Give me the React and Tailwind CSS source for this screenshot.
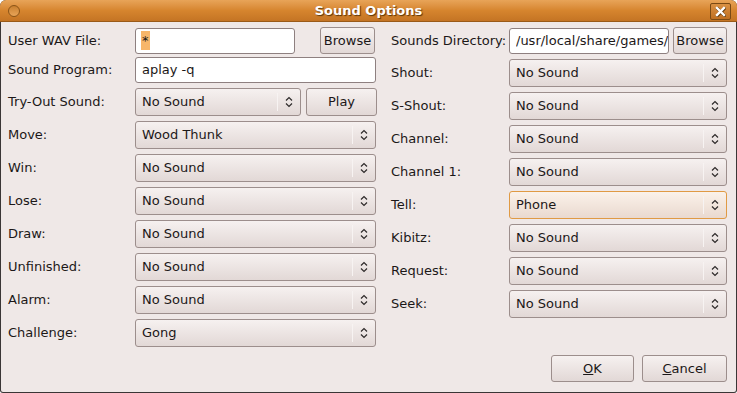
import React from 'react';

const font = { fontFamily: '"DejaVu Sans", Verdana, sans-serif' };

function Arrows() {
  return (
    <svg width="8" height="12" viewBox="0 0 8 12" className="text-[#2e2a2a]">
      <path d="M1 4.5 L4 1.5 L7 4.5" fill="none" stroke="currentColor" strokeWidth="1.2" />
      <path d="M1 7.5 L4 10.5 L7 7.5" fill="none" stroke="currentColor" strokeWidth="1.2" />
    </svg>
  );
}

function Combo({ value, focused, className = '' }) {
  return (
    <div
      className={`h-[28px] flex items-center rounded-[3px] border ${
        focused
          ? 'border-[#e09a44] bg-gradient-to-b from-[#fbf2ea] to-[#e9d9cf]'
          : 'border-[#9c8e8c] bg-gradient-to-b from-[#f6f1f0] to-[#e2d8d6]'
      } ${className}`}
    >
      <span className="flex-1 pl-[6px] text-[13px] text-[#1c1818]">{value}</span>
      <div className="w-px h-[18px] bg-[#cbbfbd] border-r border-[#f7f3f2]" />
      <div className="w-[22px] flex items-center justify-center">
        <Arrows />
      </div>
    </div>
  );
}

function Button({ children, className = '' }) {
  return (
    <div
      className={`h-[27px] flex items-center justify-center rounded-[3px] border border-[#9c8e8c] bg-gradient-to-b from-[#f6f1f0] to-[#e2d8d6] text-[13px] text-[#1c1818] ${className}`}
    >
      {children}
    </div>
  );
}

function Entry({ children, className = '' }) {
  return (
    <div
      className={`h-[26px] flex items-center rounded-[3px] border border-[#8e8080] bg-white pl-[6px] text-[13px] text-[#1c1818] overflow-hidden whitespace-nowrap ${className}`}
    >
      {children}
    </div>
  );
}

function Row({ label, children, className = '', labelWidth = 'w-[127px]', gap = 'gap-[5px]' }) {
  return (
    <div className={`flex items-center ${className}`}>
      <span className={`${labelWidth} shrink-0 text-[13px] text-[#1c1818]`}>{label}</span>
      <div className={`flex-1 flex items-center ${gap}`}>{children}</div>
    </div>
  );
}

export default function App() {
  const left = [
    ['Move:', 'Wood Thunk'],
    ['Win:', 'No Sound'],
    ['Lose:', 'No Sound'],
    ['Draw:', 'No Sound'],
    ['Unfinished:', 'No Sound'],
    ['Alarm:', 'No Sound'],
    ['Challenge:', 'Gong'],
  ];
  const right = [
    ['Shout:', 'No Sound'],
    ['S-Shout:', 'No Sound'],
    ['Channel:', 'No Sound'],
    ['Channel 1:', 'No Sound'],
    ['Tell:', 'Phone', true],
    ['Kibitz:', 'No Sound'],
    ['Request:', 'No Sound'],
    ['Seek:', 'No Sound'],
  ];

  return (
    <div style={font} className="w-[737px] h-[393px] flex flex-col bg-[#3a3636] rounded-t-[6px] rounded-b-[3px] overflow-hidden">
      {/* title bar */}
      <div className="h-[22px] shrink-0 relative flex items-center justify-center bg-gradient-to-b from-[#e8a458] via-[#d6852e] to-[#c47424] border-b border-[#9a5a18]">
        <div className="absolute left-[8px] top-[5px] w-[12px] h-[12px] rounded-full border border-[#8a5418] bg-gradient-to-b from-[#c9802e] to-[#e8a458]" />
        <span className="text-[13px] font-bold text-white [text-shadow:1px_1px_1px_#5a3408]">Sound Options</span>
        <div className="absolute right-[6px] top-[3px] w-[21px] h-[17px] rounded-[2px] border border-[#7a4a14] bg-gradient-to-b from-[#d99042] to-[#c07020] flex items-center justify-center">
          <svg width="11" height="11" viewBox="0 0 11 11">
            <path d="M2 2 L9 9 M9 2 L2 9" stroke="#5a3408" strokeWidth="3" strokeLinecap="square" transform="translate(0.5 0.5)" />
            <path d="M2 2 L9 9 M9 2 L2 9" stroke="#ffffff" strokeWidth="2.4" strokeLinecap="square" />
          </svg>
        </div>
      </div>

      {/* body */}
      <div className="flex-1 mx-px mb-px bg-[#efe8e7] rounded-b-[2px] flex flex-col px-[7px] pt-[5px]">
        <div className="flex">
          {/* left column */}
          <div className="w-[369px] flex flex-col">
            <Row label="User WAV File:" className="h-[27px]">
              <Entry className="w-[160px]">
                <span className="bg-[#f7b66a] px-[1px] -ml-[1px]">*</span>
              </Entry>
              <Button className="w-[55px] ml-[20px]">Browse</Button>
            </Row>
            <Row label="Sound Program:" className="h-[26px] mt-[3px]">
              <Entry className="w-[241px]">aplay -q</Entry>
            </Row>
            <Row label="Try-Out Sound:" className="h-[28px] mt-[5px]">
              <Combo value="No Sound" className="w-[166px]" />
              <Button className="w-[71px] h-[28px]">Play</Button>
            </Row>
            {left.map(([l, v]) => (
              <Row key={l} label={l} className="h-[28px] mt-[5px]">
                <Combo value={v} className="w-[241px]" />
              </Row>
            ))}
          </div>

          {/* right column */}
          <div className="flex-1 ml-[14px] flex flex-col">
            <Row label="Sounds Directory:" labelWidth="w-[118px]" gap="gap-[4px]" className="h-[27px]">
              <Entry className="w-[160px] pl-[3px]">
                <span className="block w-[154px] overflow-hidden">/usr/local/share/games/x</span>
              </Entry>
              <Button className="w-[54px]">Browse</Button>
            </Row>
            {right.map(([l, v, f]) => (
              <Row key={l} label={l} labelWidth="w-[118px]" className="h-[28px] mt-[5px]">
                <Combo value={v} focused={f} className="w-[218px]" />
              </Row>
            ))}
          </div>
        </div>

        <div className="mt-auto mb-[10px] flex justify-end gap-[8px] pr-[2px]">
          <Button className="w-[83px]">
            <span><span className="underline">O</span>K</span>
          </Button>
          <Button className="w-[85px]">
            <span><span className="underline">C</span>ancel</span>
          </Button>
        </div>
      </div>
    </div>
  );
}
